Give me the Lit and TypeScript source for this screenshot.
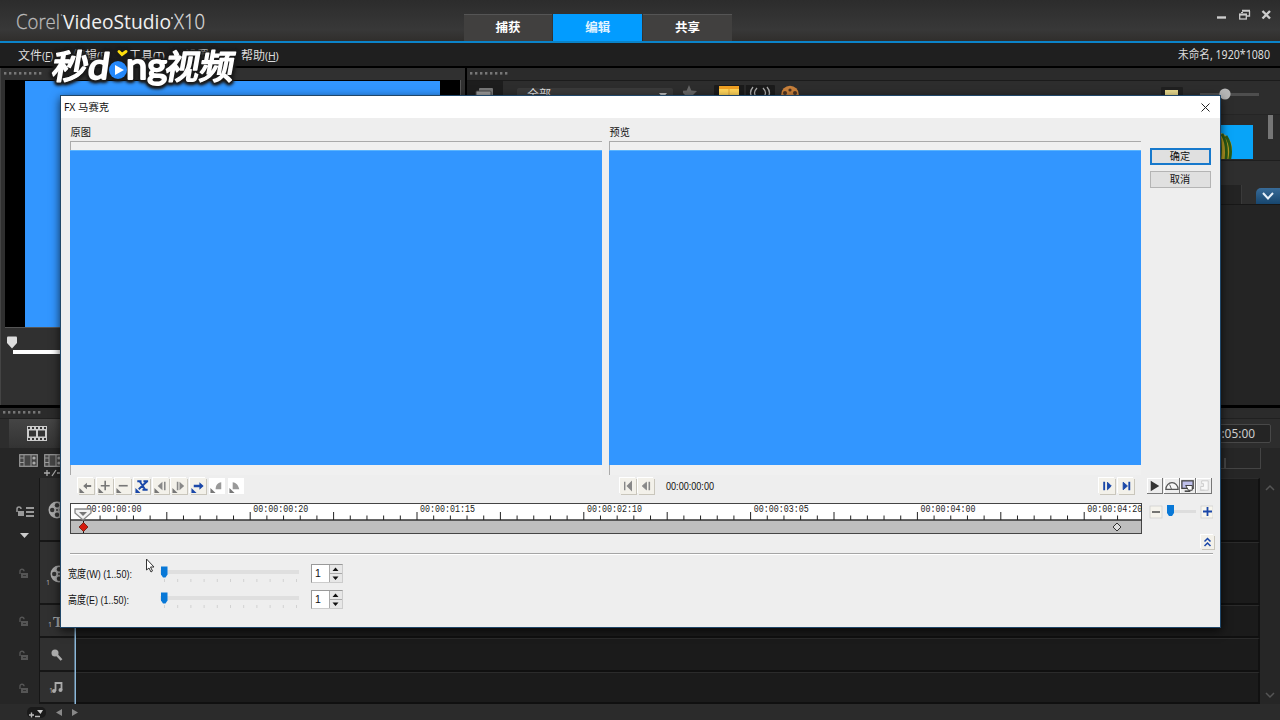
import { LitElement, html, svg, css } from "lit";
import { customElement } from "lit/decorators.js";

const fit = (text: string, width: number, size: number, cls = "") => html`
  <svg class="fit ${cls}" width=${width} height=${size + 4} viewBox="0 0 ${width} ${size + 4}">
    <text x="0" y=${size} font-size=${size} textLength=${width} lengthAdjust="spacingAndGlyphs">${text}</text>
  </svg>`;

const grip = html`<svg class="grip" width="42" height="5">
  ${Array.from({ length: 8 }, (_, i) => svg`<rect x=${3 + i * 5} y="1" width="2.4" height="2.6" fill="#777"/>`)}
</svg>`;

const corner = svg`<path d="M1.500 10.500V16H7Z" fill="#777"/>`;
const blueCorner = svg`<path d="M1.500 10.500V16H7Z" fill="#1a47a8"/>`;

const keyIcons = [
  svg`${corner}<path d="M5.500 8.500L9.500 5V7.500H14V9.500H9.500V12Z" fill="#777"/>`,
  svg`${corner}<path d="M8.700 3V13M4 8.200H13.500" stroke="#777" stroke-width="1.700"/>`,
  svg`${corner}<path d="M4 8.200H13.500" stroke="#777" stroke-width="1.700"/>`,
  svg`${blueCorner}<path d="M3.500 3.500H8M10 3.500H15M14 3.500L5 12M6 3.500L12 12.500M9 12.500H14.500" stroke="#1a47a8" stroke-width="2" fill="none"/>`,
  svg`${corner}<path d="M10 4V13L5 8.500Z" fill="#888"/><path d="M12.500 4V13" stroke="#888" stroke-width="1.700"/>`,
  svg`${corner}<path d="M9 4V13L14 8.500Z" fill="#888"/><path d="M7 4V13" stroke="#888" stroke-width="1.700"/>`,
  svg`${blueCorner}<path d="M14.500 8.500L10 4.500V7.300H4V9.700H10V12.500Z" fill="#1a47a8"/>`,
  svg`${corner}<path d="M7 12C7 8 9 5 13 4.500V12Z" fill="#999"/>`,
  svg`${corner}<path d="M5 4.500C9 5 11 8 12 12H5Z" fill="#999"/>`,
];

const lock = html`<svg width="10" height="11" viewBox="0 0 10 11"><path d="M1 6V3.200A2 2 0 0 1 5 3.200" fill="none" stroke="#555" stroke-width="1.400"/><rect x="2" y="5" width="7" height="5" fill="#555"/><path d="M4 7.500H7" stroke="#333"/></svg>`;

const reel = html`<svg width="18" height="18" viewBox="0 0 18 18"><circle cx="9" cy="9" r="8.500" fill="#aaa"/><g fill="#333"><circle cx="9" cy="4.200" r="2.200"/><circle cx="13.800" cy="9" r="2.200"/><circle cx="9" cy="13.800" r="2.200"/><circle cx="4.200" cy="9" r="2.200"/><circle cx="9" cy="9" r="1"/></g></svg>`;

const strip = html`<svg width="19" height="13" viewBox="0 0 19 13"><rect x=".7" y=".7" width="17.600" height="11.600" fill="#444" stroke="#999" stroke-width="1.200"/><path d="M5 1V12M12 1V12M1 4H5M1 8.500H5" stroke="#999"/><circle cx="15" cy="4" r="1.600" fill="#aaa"/><circle cx="15" cy="9" r="1.600" fill="#aaa"/></svg>`;

@customElement("app-root")
export class AppRoot extends LitElement {
  static styles = css`
    :host { display: block; position: relative; width: 1280px; height: 720px; overflow: hidden; background: #252525;
      font-family: "Noto Sans", "Noto Sans CJK SC", sans-serif; color: #ddd; font-size: 12px; }
    * { box-sizing: border-box; }
    svg { display: block; flex: none; }
    .fit, .logo { overflow: visible; fill: currentColor; }
    .app { display: flex; flex-direction: column; height: 720px; }
    .title { height: 43px; display: flex; background: linear-gradient(#2c2c2c, #383838 72%, #302e2c); border-bottom: 2px solid #0b83c9; flex: none; }
    .brand { width: 463.500px; padding: 11px 0 0 16px; }
    .tabs { display: flex; gap: 1px; align-items: flex-end; flex: 1; }
    .tab { width: 88.800px; height: 27px; background: #41403f; border-top: 1px solid #555; display: flex; align-items: center; justify-content: center; font-weight: 700; font-size: 12.500px; color: #fff; padding-bottom: 3px; }
    .tab.on { background: #029cff; border-color: #029cff; color: #e2f3ff; }
    .win { padding: 9px 8px 0 0; display: flex; }
    .menu { height: 25px; display: flex; justify-content: space-between; align-items: center; background: #1f1f1f; border-bottom: 2px solid #000; padding: 0 10px 0 18px; flex: none; font-size: 12px; }
    .items { display: flex; }
    .items span { width: 56px; white-space: nowrap; }
    .items .i1 { width: 55px; }
    .items small { font-size: 10.500px; letter-spacing: -.2px; }
    .work { display: flex; height: 337px; flex: none; gap: 2px; background: #000; }
    .left { width: 465px; background: #303030; border-left: 1px solid #444; padding-top: 3px; }
    .grip { margin-bottom: 4px; }
    .monitor { margin-left: 4px; width: 456px; height: 248px; background: #000; padding: 1px 20px; border: 1px solid #555; border-width: 0 1px 1px 0; }
    .monitor div { background: #3296ff; height: 246px; width: 415px; }
    .scrub { margin: 8px 0 0 4px; }
    .right { flex: 1; background: #2b2b2b; padding-top: 3px; }
    .bar { height: 34px; border-top: 1px solid #1b1b1b; display: flex; align-items: flex-start; background: #2d2d2d; }
    .cell { width: 36px; height: 33px; background: #1d1d1d; padding: 6px 8px; margin-right: 14px; }
    .select { width: 156px; height: 22px; margin-top: 7px; background: #3a3a3a; padding: 0 6px 0 10px; display: flex; justify-content: space-between; border-radius: 2px; line-height: 13px; }
    .tools { display: flex; padding: 4px 0 0 10px; }
    .zoomer { margin-left: auto; margin-right: 20px; padding-top: 6px; }
    .thumbs { height: 47px; display: flex; justify-content: flex-end; gap: 15px; border-top: 1px solid #252525; border-bottom: 1px solid #1e1e1e; padding-right: 7px; }
    .thumb { width: 44px; height: 34px; margin-top: 10px; background: #08a4f8; overflow: hidden; }
    .roll { width: 5px; height: 24px; background: #767676; }
    .opt { height: 44px; display: flex; justify-content: flex-end; align-items: flex-end; background: #2e2e2e; border-bottom: 1px solid #171717; }
    .opt .dark { height: 19px; flex: 1; background: #232323; margin-right: 14px; border-right: 1px solid #3a3a3a; }
    .chev { width: 24px; height: 16px; background: linear-gradient(#386b98, #17466e); border-radius: 5px 0 0 0; padding: 4px 6px; }
    .under { height: 200px; background: #242424; }
    .time { flex: 1; border-top: 3px solid #000; background: #2b2b2b; display: flex; flex-direction: column; }
    .time .grip { margin: 2px 0 3px; }
    .tbar { height: 30px; display: flex; justify-content: space-between; background: #2d2d2d; border-top: 1px solid #202020; }
    .story { width: 52px; margin-left: 9px; background: linear-gradient(#454545, #333); padding: 7px 18px; }
    .dur { width: 92px; height: 19px; margin: 5px 9px 0 0; border: 1px solid #484848; border-radius: 2px; padding-right: 15px; background: #242424; display: flex; justify-content: flex-end; color: #ccc; }
    .trules { height: 30px; display: flex; background: #262626; }
    .trules .ic { display: grid; grid-template-columns: 19px 19px; column-gap: 6px; row-gap: 1px; padding: 6px 0 0 19px; width: 75px; flex: none; }
    .trules .pm { grid-column: 2; }
    .scale { flex: 1; margin-right: 19px; height: 21px; border: 1px solid #444; border-width: 0 1px 1px 0; }
    .tracks { display: grid; grid-template-columns: 39px 37px 1fr 20px; grid-template-rows: 64px 63px 33px 34px 32px; background: #262626; height: 226px; }
    .lk { display: flex; align-items: center; justify-content: center; padding-left: 9px; }
    .lk.first { padding-top: 23px; padding-left: 11px; }
    .hd { background: #303030; border-left: 1px solid #161616; box-shadow: inset -1.500px 0 #8bb8da, inset 0 -2px #161616; display: flex; align-items: center; justify-content: center; overflow: hidden; color: #aaa; padding-right: 3px; }
    .tk { background: #1b1b1b; border-bottom: 2px solid #101010; border-top: 1px solid #2b2b2b; border-right: 2px solid #111; }
    .sc { display: flex; align-items: flex-start; justify-content: center; padding-top: 6px; }
    .sc.end { align-items: flex-end; padding-bottom: 5px; }
    .foot { height: 16px; padding: 3px 0 0 27px; }
    .mark { position: absolute; left: 45px; top: 42px; overflow: visible; filter: drop-shadow(0 0 1.500px #1b1b1b) drop-shadow(0 0 1.500px #1b1b1b) drop-shadow(0 1px 1px #1b1b1b) drop-shadow(0 0 1px #1b1b1b); }

    .dlg { position: absolute; left: 61px; top: 96px; width: 1159px; height: 531px; background: #eee; color: #111; box-shadow: 0 0 0 1px #204769, 0 3px 9px 1px rgba(0,0,0,.7); font-family: "Liberation Sans", "Noto Sans CJK SC", sans-serif; font-size: 10.500px; }
    .dt { height: 22px; background: #fff; display: flex; align-items: center; justify-content: space-between; padding: 0 10px 0 3px; font-family: "Noto Sans", "Noto Sans CJK SC", sans-serif; font-size: 10px; }
    .views { display: grid; grid-template-columns: 532px 532px 62px; gap: 7px; padding-left: 9px; height: 355px; }
    .lab { height: 23px; line-height: 29px; font-size: 10.200px; padding-left: .5px; }
    .pane { height: 334px; border: 1px solid #aaa; border-width: 1px 0 0 1px; background: #f0f0f0; padding-top: 8px; }
    .pane div { height: 315px; background: #3296ff; border-top: 1px solid #59b4ff; margin-left: -1px; }
    .btns { padding: 30px 0 0 1.500px; display: flex; flex-direction: column; gap: 6px; }
    .btn { width: 61px; height: 17px; background: #e0e0e0; border: 1px solid #b4b4b4; line-height: 16px; text-align: center; font-size: 10.200px; }
    .btn.ok { border: 2px solid #1779cc; line-height: 14px; }
    .tr { height: 30px; display: flex; align-items: center; padding: 0 0 4px 17px; }
    .keys, .pair { display: flex; gap: 2.700px; }
    .b { width: 16px; height: 16px; background: #f3f1ea; box-shadow: 1px 1px 0 #c9c6bc, -1px -1px 0 #fff; }
    .b.w { background: #fff; box-shadow: none; }
    .back { margin-left: 376px; } .tc { margin-left: 12px; }
    .fwd { margin-left: 385px; gap: 3px; } .play { margin-left: 13px; display: flex; gap: .4px; }
    .p { width: 16px; height: 16px; background: #ededed; box-shadow: inset -1px -1px 0 #777, inset 1px 1px #fff; }
    .rl { display: flex; padding-left: 9px; height: 32px; }
    .zm { display: flex; padding: 0 0 0 7px; align-items: flex-start; }
    .col { height: 18px; display: flex; justify-content: flex-end; padding: 0 6px 0 0; }
    .col .b { width: 13px; height: 14px; }
    .hr { margin: 0 7px 0 9px; height: 2px; background: #a5a5a5; border-bottom: 1px solid #fff; }
    .params { padding: 6px 0 0 7px; display: flex; flex-direction: column; gap: 1px; }
    .row { display: flex; height: 25px; align-items: center; }
    .name { width: 86px; }
    .spin { width: 32px; height: 19px; margin-left: 11px; border: 1px solid #999; border-right-color: #ccc; border-bottom-color: #ccc; background: #fff; display: flex; justify-content: space-between; padding-left: 3px; line-height: 17px; font-size: 10.500px; }
    .cursor { position: absolute; left: 84px; top: 462px; }
  `;

  render() {
    return html`
      <div class="app">
        <div class="title">
          <div class="brand"><svg class="logo" width="192" height="25" viewBox="0 0 192 25" font-family="Open Sans, Noto Sans, sans-serif" font-size="20.500">
            <text x="0" y="18" fill="#bbb" stroke="#bbb" stroke-width=".3" font-weight="300" textLength="44" lengthAdjust="spacingAndGlyphs">Corel</text>
            <circle cx="45.500" cy="4" r=".8" fill="#aaa"/>
            <text x="47" y="18" fill="#f0f0f0" font-weight="400" textLength="108" lengthAdjust="spacingAndGlyphs">VideoStudio</text>
            <circle cx="156" cy="7" r="1" fill="#ddd"/>
            <text x="158" y="18" fill="#ddd" stroke="#ddd" stroke-width=".3" font-weight="300" textLength="31" lengthAdjust="spacingAndGlyphs">X10</text>
          </svg></div>
          <div class="tabs"><div class="tab">捕获</div><div class="tab on">编辑</div><div class="tab">共享</div></div>
          <div class="win"><svg width="56" height="14" viewBox="0 0 56 14"><g fill="none" stroke="#ccc">
            <path d="M1 8.500H10" stroke-width="2.400"/><path d="M26 1.700H34M26 3V4" stroke-width="2"/><path d="M33.500 2V7H31" stroke-width="1.300"/><rect x="23.700" y="5.500" width="6.600" height="4.500" stroke-width="1.300"/><path d="M23 5.500H31" stroke-width="2"/><path d="M46.500 2L54 9.500M54 2L46.500 9.500" stroke-width="2.400"/></g></svg></div>
        </div>
        <div class="menu">
          <div class="items"><span class="i1">文件<small>(<u>F</u>)</small></span><span>编辑<small>(<u>E</u>)</small></span><span>工具<small>(<u>T</u>)</small></span><span>设置<small>(<u>S</u>)</small></span><span>帮助<small>(<u>H</u>)</small></span></div>
          ${fit("未命名, 1920*1080", 92, 12)}
        </div>
        <div class="work">
          <div class="left">${grip}<div class="monitor"><div></div></div>
            <svg class="scrub" width="430" height="22"><path d="M8 16H430" stroke="#fff" stroke-width="4"/><path d="M2 1.500Q2 .5 3 .5H11Q12 .5 12 1.500V7L7 12.500L2 7Z" fill="#ddd"/></svg>
          </div>
          <div class="right">${grip}
            <div class="bar">
              <div class="cell"><svg width="21" height="14"><rect x="4" y="1" width="14" height="10" rx="1" fill="#777"/><rect x="1" y="4" width="15" height="10" rx="1" fill="#999" stroke="#444"/></svg></div>
              <div class="select"><span>全部</span><svg width="8" height="12"><path d="M0 5H8L4 10Z" fill="#bbb"/></svg></div>
              <div class="tools"><svg width="125" height="28">
                <path d="M6 0L8.300 5.500L14 6L10 10L11 15L6 12L1 15L2 10L-2 6L3.700 5.500Z" fill="#666"/>
                <rect x="31" y="-1" width="61" height="29" rx="3" fill="#1b1b1b"/><rect x="36" y="1" width="20" height="15" fill="#ffd45a"/><path d="M36 2.500H56" stroke="#ee9f22" stroke-width="3"/><path d="M46 4V16" stroke="#e1a437"/>
                <path d="M62 30V-1" stroke="#3a3a3a"/>
                <g fill="none" stroke="#aaa" stroke-width="1.300"><path d="M70 2Q65 8 70 14M74 3Q69 8 74 13M84 2Q89 8 84 14M80 3Q85 8 80 13"/></g>
                <circle cx="107" cy="9.500" r="8.800" fill="#c8803b"/><g fill="#4b3424"><circle cx="102" cy="8" r="2"/><circle cx="107" cy="5" r="1.600"/><circle cx="112" cy="8" r="2"/></g>
              </svg></div>
              <svg class="zoomer" width="106" height="26"><rect x="7" y="-1" width="22" height="20" rx="3" fill="#202020"/><rect x="11" y="3" width="13" height="12" fill="#e6d78c"/><path d="M46 7.500H105" stroke="#4e4e4e" stroke-width="3"/><circle cx="71" cy="7" r="5.600" fill="#b7b7b7"/></svg>
            </div>
            <div class="thumbs"><div class="thumb"><svg width="44" height="34"><ellipse cx="10" cy="24" rx="13" ry="16" fill="#b89a24"/><path d="M13 9Q20 21 16 40M17 11Q25 24 19 40M10 8Q13 24 10 40" fill="none" stroke="#2b5914" stroke-width="2.800"/></svg></div><div class="roll"></div></div>
            <div class="opt"><div class="dark"></div><div class="chev"><svg width="12" height="9"><path d="M1 1L6 6.500L11 1" fill="none" stroke="#e7f1fa" stroke-width="2"/></svg></div></div>
            <div class="under"></div>
          </div>
        </div>
        <div class="time">${grip}
          <div class="tbar"><div class="story"><svg width="20" height="15" viewBox="0 0 20 15"><rect width="20" height="15" fill="#ccc"/><path d="M1 2H20M1 13H20" stroke="#333" stroke-width="2" stroke-dasharray="2 2"/><path d="M2 4.500H9V10.500H2ZM11 4.500H18V10.500H11Z" fill="#333"/></svg></div>
            <div class="dur">${fit("00:00:05:00", 64, 12.5)}</div></div>
          <div class="trules"><div class="ic">${strip}${strip}<svg class="pm" width="19" height="8" viewBox="2 0 19 8"><path d="M2 4H8M5 1V7M10 7L14 1M15 4H20" stroke="#aaa" stroke-width="1.300"/></svg></div><div class="scale"><svg width="1184" height="20"><path d="M1150 10V20" stroke="#666"/></svg></div></div>
          <div class="tracks">
            <div class="lk first"><svg width="20" height="40" viewBox="0 0 20 40"><path d="M2 10V7A2 2 0 0 1 6 7" fill="none" stroke="#999" stroke-width="1.500"/><rect x="3" y="9" width="6" height="5" fill="#999"/><path d="M11 6H19M11 10H19M11 14H19" stroke="#999" stroke-width="2"/><path d="M5 31H14L9.500 36Z" fill="#ccc"/></svg></div><div class="hd">${reel}</div><div class="tk"></div><div class="sc"><svg width="10" height="8"><path d="M1 6L5 2L9 6" fill="none" stroke="#555" stroke-width="1.500"/></svg></div>
            <div class="lk">${lock}</div><div class="hd"><svg width="4" height="30"><text x="0" y="26" font-size="7" fill="#aaa">1</text></svg>${reel}</div><div class="tk"></div><div></div>
            <div class="lk">${lock}</div><div class="hd"><svg width="18" height="18"><text x="0" y="14" font-size="7" fill="#aaa">1</text><text x="5" y="14" font-size="15" font-weight="700" font-family="Liberation Serif" fill="#aaa">T</text></svg></div><div class="tk"></div><div></div>
            <div class="lk">${lock}</div><div class="hd"><svg width="12" height="12"><circle cx="4" cy="4" r="3.500" fill="#aaa"/><path d="M5 5L10.500 11" stroke="#aaa" stroke-width="2.500"/></svg></div><div class="tk"></div><div></div>
            <div class="lk">${lock}</div><div class="hd"><svg width="15" height="15"><text x="0" y="12" font-size="7" fill="#aaa">1</text><path d="M6.500 10V2H12.500V9" fill="none" stroke="#aaa" stroke-width="1.800"/><circle cx="5" cy="10" r="2" fill="#aaa"/><circle cx="11.500" cy="9" r="2" fill="#aaa"/></svg></div><div class="tk"></div><div class="sc end"><svg width="10" height="8"><path d="M1 2L5 6L9 2" fill="none" stroke="#555" stroke-width="1.500"/></svg></div>
          </div>
          <div class="foot"><svg width="55" height="12"><rect width="19" height="11" rx="5" fill="#1a1a1a"/><path d="M2 8H7M4.500 5.500V10.500M8 9.500H13" stroke="#bbb" stroke-width="1.400"/><path d="M10 3H16L13.500 7Z" fill="#ccc"/><path d="M35 2V9L29 5.500ZM45 2V9L51 5.500Z" fill="#888"/></svg></div>
        </div>
      </div>
      <svg class="mark" width="200" height="52" viewBox="0 0 200 52">
        <g transform="translate(6 0) skewX(-10)" font-family="Noto Sans CJK SC, sans-serif" font-weight="500" fill="#fff" stroke="#fff" stroke-width="1.400" stroke-linejoin="round">
          <text x="6" y="37" font-size="34" textLength="36" lengthAdjust="spacingAndGlyphs">秒</text><text x="119" y="37" font-size="34" textLength="69" lengthAdjust="spacingAndGlyphs">视频</text>
        </g>
        <g font-family="Lato, Open Sans, sans-serif" font-weight="400" fill="#fff" stroke="#fff" stroke-width="2" stroke-linejoin="round" font-size="36"><text transform="translate(45 0) skewX(-8)" x="2" y="37" textLength="21" lengthAdjust="spacingAndGlyphs">d</text><text x="81" y="37" textLength="41" lengthAdjust="spacingAndGlyphs">ng</text></g>
        <circle cx="73" cy="28" r="9" fill="#2488fb"/><path d="M70 23V33L79 28Z" fill="#fff"/><path d="M74 9.500L77 12.500L81 9.500" fill="none" stroke="#ffdf0d" stroke-width="3" stroke-linecap="round"/>
      </svg>
      ${this.dialog()}
    `;
  }

  dialog() {
    const btn = (g: unknown, cls = "b") => html`<div class=${cls}><svg width="16" height="16" viewBox="0 0 17 17">${g}</svg></div>`;
    const blue = "#1a47a8";
    const labels = ["00:00:00:00", "00:00:00:20", "00:00:01:15", "00:00:02:10", "00:00:03:05", "00:00:04:00", "00:00:04:20"];
    const param = (name: string, w: number) => html`<div class="row"><div class="name">${fit(name, w, 11.5)}</div>
      <svg width="146" height="22"><rect x="6" y="7" width="139" height="4" fill="#dfdfdf"/>
        ${Array.from({ length: 11 }, (_, i) => svg`<path d="M${10.5 + i * 13.2} 16V19" stroke="#d2d2d2"/>`)}
        <path d="M7 3.500H13.500V11.500L11.500 14.500H9L7 11.500Z" fill="#0878d7"/></svg>
      <div class="spin">1<svg width="13" height="17"><rect width="13" height="8" fill="#e7e7e7"/><rect y="9" width="13" height="8" fill="#e7e7e7"/><path d="M0 8.500H13M.5 0V17" stroke="#aaa"/><path d="M3.500 6L6.500 2.500L9.500 6ZM3.500 11.500L6.500 15L9.500 11.500Z" fill="#111"/></svg></div></div>`;
    return html`<div class="dlg">
      <div class="dt">${fit("FX 马赛克", 45, 10.5)}<svg width="9" height="9"><path d="M.5 .5L8.500 8.500M8.500 .5L.5 8.500" stroke="#222"/></svg></div>
      <div class="views">
        <div><div class="lab">原图</div><div class="pane"><div></div></div></div>
        <div><div class="lab">预览</div><div class="pane"><div></div></div></div>
        <div class="btns"><div class="btn ok">确定</div><div class="btn">取消</div></div>
      </div>
      <div class="tr">
        <div class="keys">${keyIcons.map((k, i) => btn(k, i > 6 ? "b w" : "b"))}</div>
        <div class="pair back">${btn(svg`<path d="M5 4V13M12 4.500V12.500L8 8.500Z" fill="#888" stroke="#888" stroke-width="1.500"/>`)}${btn(svg`<path d="M9 4.500V12.500L4.500 8.500Z" fill="#888" stroke="#888"/><path d="M12 4V13" stroke="#888" stroke-width="1.700"/>`)}</div>
        <div class="tc">${fit("00:00:00:00", 48, 11)}</div>
        <div class="pair fwd">${btn(svg`<path d="M9 4.500V12.500L13 8.500Z" fill=${blue} stroke=${blue}/><path d="M5.500 4V13" stroke=${blue} stroke-width="2"/>`)}${btn(svg`<path d="M5.500 4.500V12.500L10 8.500Z" fill=${blue} stroke=${blue}/><path d="M12 4V13" stroke=${blue} stroke-width="2"/>`)}</div>
        <div class="play">
          ${btn(svg`<path d="M4 3V14L13 8.500Z" fill="#333"/>`, "p")}
          ${btn(svg`<path d="M2 12A6.500 7 0 0 1 15 12Z" fill="#f7f7f7" stroke="#555" stroke-width="1.300"/><path d="M8 12L6 7" stroke="#555"/>`, "p")}
          ${btn(svg`<rect x="2" y="3" width="12" height="8" fill="#bfc0eb" stroke="#444" stroke-width="1.400"/><path d="M6 8H13V13H9Z" fill="#fff" stroke="#333"/><path d="M5 14H11" stroke="#333" stroke-width="1.500"/>`, "p")}
          ${btn(svg`<path d="M6 3H13V13H5V9H8V6H6Z" fill="#f8f8f8" stroke="#ccc"/><path d="M4 13H9" stroke="#ccc"/>`, "p")}
        </div>
      </div>
      <div class="rl">
        <svg width="1072" height="31" viewBox="0 0 1072 31"><rect x=".5" y=".5" width="1071" height="30" fill="#fff" stroke="#444"/><rect x="1" y="17" width="1070" height="13" fill="#bebebe"/><path d="M0 17H1072" stroke="#333" stroke-width="1.300"/>
          ${Array.from({ length: 63 }, (_, i) => svg`<path d="M${13.4 + i * 16.68} ${i % 5 ? 12.5 : 9}V17" stroke="#222"/>`)}
          ${labels.map((t, i) => svg`<text x=${16.5 + i * 166.8} y="9" font-family="Liberation Mono" font-size="10.500" textLength="55" lengthAdjust="spacingAndGlyphs" fill="#222">${t}</text>`)}
          <path d="M5 6H21V10L13 17L5 10Z" fill="#f2f2f2" stroke="#888" stroke-width="1.300"/><path d="M9 9H17L13 13Z" fill="#777"/>
          <path d="M13.500 18V30" stroke="#111"/><path d="M13.500 19.500L18 24L13.500 28.500L9 24Z" fill="#d51b0d" stroke="#66190e" stroke-width=".8"/>
          <path d="M1047 20L1051 24L1047 28L1043 24Z" fill="#ddd" stroke="#333"/>
        </svg>
        <div class="zm"><svg width="64" height="20"><rect x="1" y="3" width="12" height="12" fill="#f5f3ec" stroke="#ccc" stroke-width=".7"/><path d="M3 9H11" stroke="#555" stroke-width="1.600"/><rect x="18" y="7" width="29" height="3" fill="#ddd"/><path d="M18 2H25V10L23 13H20L18 10Z" fill="#0878d7"/><rect x="52" y="3" width="12" height="12" fill="#f8f6ee" stroke="#ccc" stroke-width=".7"/><path d="M54 8.500H63M58.500 4V13" stroke=${blue} stroke-width="1.800"/></svg></div>
      </div>
      <div class="col"><div class="b"><svg width="13" height="14"><path d="M3.500 6.500L6.500 3.500L9.500 6.500M3.500 11L6.500 8L9.500 11" fill="none" stroke=${blue} stroke-width="1.500"/></svg></div></div>
      <div class="hr"></div>
      <div class="params">${param("宽度(W) (1..50):", 64)}${param("高度(E) (1..50):", 61)}</div>
      <svg class="cursor" width="12" height="17"><path d="M1.500 1L9 9H5.500L7.500 13L6 14L4 10L1.500 12Z" fill="#fff" stroke="#333"/></svg>
    </div>`;
  }
}
